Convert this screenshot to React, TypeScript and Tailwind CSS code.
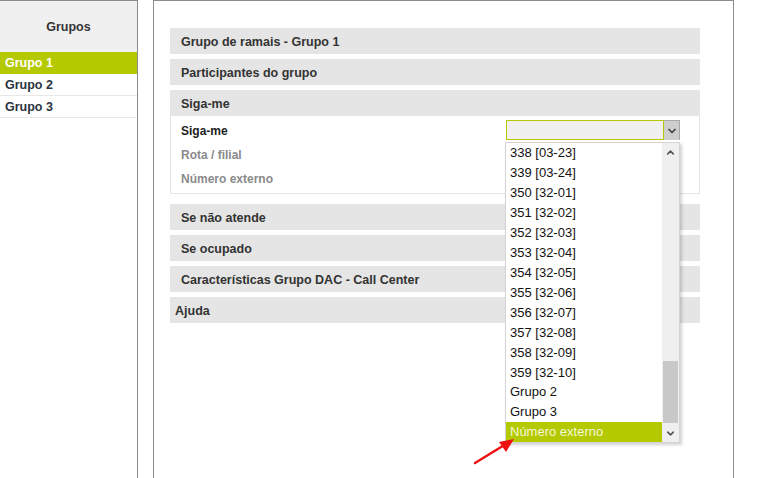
import { ChevronDown, ChevronUp } from "lucide-react"

const groups = ["Grupo 1", "Grupo 2", "Grupo 3"]

const options = [
  "338 [03-23]",
  "339 [03-24]",
  "350 [32-01]",
  "351 [32-02]",
  "352 [32-03]",
  "353 [32-04]",
  "354 [32-05]",
  "355 [32-06]",
  "356 [32-07]",
  "357 [32-08]",
  "358 [32-09]",
  "359 [32-10]",
  "Grupo 2",
  "Grupo 3",
  "Número externo",
]

function SectionHeader({ title, indent = true }: { title: string; indent?: boolean }) {
  return (
    <div
      className={`h-[26px] bg-[#e5e5e5] flex items-center pt-[2px] text-[12.5px] font-bold text-[#333] ${indent ? "pl-[11px]" : "pl-[5px]"}`}
    >
      {title}
    </div>
  )
}

export default function App() {
  return (
    <div
      className="relative flex w-[763px] h-[478px] bg-white overflow-hidden"
      style={{ fontFamily: "Tahoma, 'Liberation Sans', Arial, sans-serif" }}
    >
      {/* sidebar */}
      <div className="w-[138px] shrink-0 border-t border-r border-[#8c8c8c] flex flex-col">
        <div className="h-[51px] bg-[#f0f0f0] flex items-center justify-center pt-[2px] text-[12.5px] font-bold text-[#333]">
          Grupos
        </div>
        {groups.map((g, i) => (
          <div
            key={g}
            className={`h-[22px] flex items-center pl-[5px] pt-[2px] text-[12.5px] font-bold border-b ${
              i === 0
                ? "bg-[#b5c900] text-white border-[#b5c900]"
                : "bg-white text-[#2b3340] border-[#e8e8e8]"
            }`}
          >
            {g}
          </div>
        ))}
      </div>

      {/* main panel */}
      <div className="ml-[15px] w-[581px] shrink-0 border-t border-l border-r border-[#8c8c8c] pt-[27px] pl-[16px]">
        <div className="w-[530px] flex flex-col gap-[5px]">
          <SectionHeader title="Grupo de ramais - Grupo 1" />
          <SectionHeader title="Participantes do grupo" />
          <div className="flex flex-col">
            <SectionHeader title="Siga-me" />
            <div className="relative h-[78px] border-l border-r border-b border-[#e5e5e5] pl-[10px] pt-[3px] text-[12px] font-bold">
              <div className="h-[24px] flex items-center text-[#222]">Siga-me</div>
              <div className="h-[24px] flex items-center text-[#8a8a8a]">Rota / filial</div>
              <div className="h-[24px] flex items-center text-[#8a8a8a]">Número externo</div>

              {/* select box */}
              <div className="absolute left-[335px] top-[4px] flex h-[20px] w-[174px]">
                <div className="w-[158px] border border-[#b5c900] bg-[#f0f0f0]" />
                <div className="w-[16px] bg-[#cdcdcd] border-t border-r border-[#a8a8a8] flex items-center justify-center">
                  <ChevronDown className="w-[12px] h-[12px] text-[#444]" strokeWidth={3.5} />
                </div>
              </div>
            </div>
          </div>
          <div className="mt-[5px] flex flex-col gap-[5px]">
            <SectionHeader title="Se não atende" />
            <SectionHeader title="Se ocupado" />
            <SectionHeader title="Características Grupo DAC - Call Center" />
            <SectionHeader title="Ajuda" indent={false} />
          </div>
        </div>
      </div>

      {/* dropdown list */}
      <div className="absolute left-[505px] top-[142px] w-[175px] h-[301px] bg-white border border-[#d4d4d4] shadow-[2px_2px_3px_rgba(0,0,0,0.18)] flex">
        <div className="flex-1 flex flex-col">
          {options.map((o, i) => (
            <div
              key={o}
              className={`h-[20px] flex items-center pl-[4px] text-[13px] ${
                i === options.length - 1 ? "bg-[#b5c900] text-[#f4f7d8]" : "text-[#111]"
              }`}
            >
              {o}
            </div>
          ))}
        </div>
        <div className="w-[17px] bg-[#efefef] flex flex-col">
          <div className="h-[18px] flex items-center justify-center">
            <ChevronUp className="w-[11px] h-[11px] text-[#555]" strokeWidth={3.5} />
          </div>
          <div className="flex-1 flex flex-col justify-end px-[1px] pb-[1px]">
            <div className="h-[62px] bg-[#c8c8c8]" />
          </div>
          <div className="h-[18px] flex items-center justify-center">
            <ChevronDown className="w-[11px] h-[11px] text-[#555]" strokeWidth={3.5} />
          </div>
        </div>
      </div>

      {/* red annotation arrow */}
      <svg className="absolute left-[470px] top-[432px]" width="50" height="36" viewBox="0 0 50 36">
        <line x1="5" y1="31" x2="36" y2="12" stroke="#ee1111" strokeWidth="2.5" strokeLinecap="round" />
        <polygon points="44,7 29,10 36,20" fill="#ee1111" />
      </svg>
    </div>
  )
}
